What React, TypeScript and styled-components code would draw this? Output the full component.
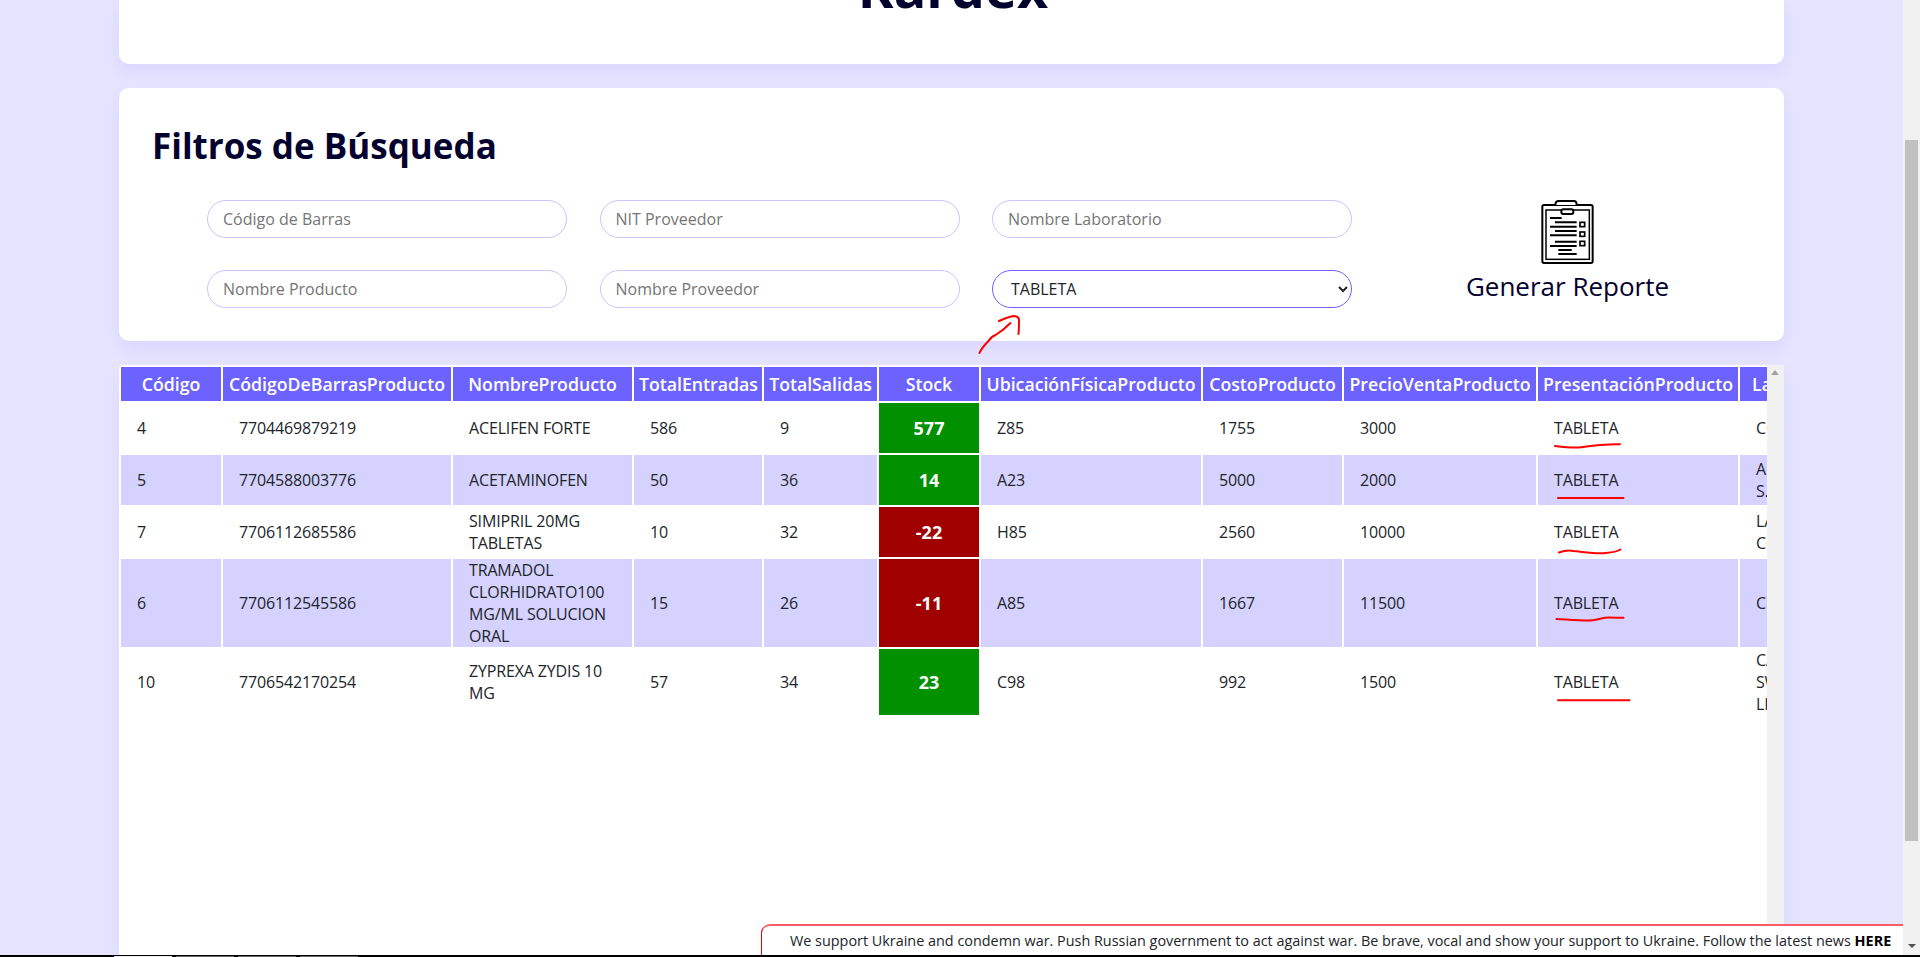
import React from "react";
import styled, { createGlobalStyle } from "styled-components";

const Global = createGlobalStyle`
  html, body { margin: 0; padding: 0; height: 957px; overflow: hidden; background: #000; }
  #root { height: 957px; }
  * { box-sizing: border-box; }
`;

const Shell = styled.div`
  position: relative;
  height: 957px;
  display: flex;
  flex-direction: column;
  overflow: hidden;
  font-family: "Open Sans", "Liberation Sans", sans-serif;
  font-size: 16px;
  color: #212529;
`;
const Viewport = styled.div`
  flex: 1;
  min-height: 0;
  display: flex;
`;
const Page = styled.main`
  position: relative;
  flex: 1;
  min-width: 0;
  background: #e7e4ff;
  padding: 0 119px;
  display: flex;
  flex-direction: column;
  gap: 24px;
  overflow: hidden;
`;
const Card = styled.section`
  background: #fff;
  border-radius: 10px;
  box-shadow: 0 8px 16px rgba(108, 99, 255, 0.1);
`;
const TitleCard = styled(Card)`
  height: 64px;
  flex: none;
  border-radius: 0 0 10px 10px;
  display: flex;
  flex-direction: column;
  justify-content: flex-end;
  align-items: center;
`;
const PageTitle = styled.h1`
  margin: 0 0 77px;
  padding-left: 3px;
  font-size: 54px;
  line-height: 30px;
  height: 15px;
  font-weight: 700;
  color: #03012d;
`;
const FilterCard = styled(Card)`
  height: 253px;
  flex: none;
  padding: 34px 33px 0;
`;
const SectionTitle = styled.h2`
  margin: 0;
  font-size: 35px;
  line-height: 48px;
  font-weight: 700;
  color: #03012d;
`;
const FilterGrid = styled.div`
  margin: 30px 0 0 55px;
  display: grid;
  grid-template-columns: 360px 360px 360px 1fr;
  grid-auto-rows: 38px;
  gap: 32px 32.5px;
`;
const TextField = styled.input`
  width: 100%;
  height: 38px;
  border: 1px solid #c9c5ff;
  border-radius: 19px;
  padding: 0 15px;
  font: inherit;
  color: #212529;
  background: #fff;
  outline: none;
  &::placeholder { color: #757575; opacity: 1; }
`;
const SelectField = styled.select`
  width: 100%;
  height: 38px;
  border: 1px solid #6c63ff;
  border-radius: 19px;
  padding: 0 4px 0 14px;
  font: inherit;
  color: #212529;
  background-color: #fff;
  outline: none;
`;
const ReportButton = styled.button`
  grid-column: 4;
  grid-row: 1 / span 2;
  margin: 0 0 0 63px;
  width: 240px;
  padding: 0;
  border: 0;
  background: none;
  display: flex;
  flex-direction: column;
  align-items: center;
  font-family: inherit;
  font-size: 26px;
  line-height: 34px;
  color: #03012d;
`;
const ReportIcon = styled.svg`
  width: 53px;
  height: 64px;
  margin-bottom: 5px;
  display: block;
`;
const TableCard = styled(Card)`
  flex: 1;
  min-height: 0;
  display: flex;
  border-radius: 4px 0 0 0;
`;
const TableArea = styled.div`
  flex: 1;
  min-width: 0;
  overflow: hidden;
`;
const Table = styled.table`
  table-layout: fixed;
  width: 1826px;
  border-collapse: separate;
  border-spacing: 2px;
`;
const Col = styled.col<{ $w: number }>`
  width: ${(p) => p.$w}px;
`;
const HeadCell = styled.th`
  height: 34px;
  padding: 0 5px;
  background: #6c63ff;
  color: #fff;
  font-weight: 600;
  font-size: 17.7px;
  line-height: 24px;
  white-space: nowrap;
  overflow: hidden;
  text-align: center;
`;
const Row = styled.tr<{ $alt: boolean }>`
  height: 50px;
  background: ${(p) => (p.$alt ? "#d5d2ff" : "#fff")};
`;
const Cell = styled.td`
  padding: 0 16px;
  line-height: 22px;
  letter-spacing: -0.15px;
  white-space: pre-line;
  overflow: hidden;
  color: #212529;
`;
const StockCell = styled.td<{ $low: boolean }>`
  padding: 0;
  text-align: center;
  font-weight: 700;
  font-size: 18px;
  color: #fff;
  background: ${(p) => (p.$low ? "#a00000" : "#009000")};
`;
const Track = styled.div`
  position: relative;
  flex: none;
  width: 17px;
  background: #f1f1f1;
`;
const Thumb = styled.div`
  position: absolute;
  top: 140px;
  left: 2px;
  width: 13px;
  height: 701px;
  background: #c1c1c1;
`;
const ArrowUp = styled.span`
  position: absolute;
  top: 5px;
  left: 4px;
  border: 4.5px solid transparent;
  border-top: 0;
  border-bottom: 5px solid #a3a3a3;
`;
const ArrowDown = styled.span`
  position: absolute;
  bottom: 7px;
  left: 5px;
  border: 4px solid transparent;
  border-bottom: 0;
  border-top: 4px solid #505050;
`;
const Banner = styled.aside`
  position: absolute;
  right: 0;
  bottom: 0;
  left: 761px;
  height: 31px;
  padding: 4px 0 0 28px;
  background: #fff;
  border-top: 2px solid #ff5b64;
  border-left: 1px solid #f00;
  border-radius: 9px 0 0 0;
  font-size: 14.4px;
  line-height: 22px;
  white-space: nowrap;
  color: #212529;
`;
const BannerLink = styled.b`
  font-weight: 700;
  color: #000;
`;
const BottomEdge = styled.div`
  height: 2px;
  flex: none;
  background: #000;
  display: flex;
  align-items: flex-end;
  gap: 4px;
  padding-left: 114px;
`;
const Sliver = styled.span<{ $active?: boolean }>`
  width: 58px;
  height: 1px;
  background: ${(p) => (p.$active ? "#e8e8e8" : "#666")};
`;
const Ink = styled.svg`
  position: absolute;
  top: 0;
  left: 0;
  width: 1920px;
  height: 957px;
  pointer-events: none;
  fill: none;
  stroke: #f00;
  stroke-width: 2;
  stroke-linecap: round;
  stroke-linejoin: round;
`;

const widths = [100, 228, 179, 128, 113, 100, 220, 139, 192, 200, 203];
const heads = [
  "Código", "CódigoDeBarrasProducto", "NombreProducto", "TotalEntradas", "TotalSalidas", "Stock",
  "UbicaciónFísicaProducto", "CostoProducto", "PrecioVentaProducto", "PresentaciónProducto", "LaboratorioProducto",
];
const rows = [
  { id: "4", bar: "7704469879219", name: "ACELIFEN FORTE", inn: "586", out: "9", stock: 577, loc: "Z85", cost: "1755", price: "3000", lab: "COASPHARMA" },
  { id: "5", bar: "7704588003776", name: "ACETAMINOFEN", inn: "50", out: "36", stock: 14, loc: "A23", cost: "5000", price: "2000", lab: "ALFA\nS.A." },
  { id: "7", bar: "7706112685586", name: "SIMIPRIL 20MG TABLETAS", inn: "10", out: "32", stock: -22, loc: "H85", cost: "2560", price: "10000", lab: "LA SANTE\nCOLOMBIA" },
  { id: "6", bar: "7706112545586", name: "TRAMADOL CLORHIDRATO100 MG/ML SOLUCION ORAL", inn: "15", out: "26", stock: -11, loc: "A85", cost: "1667", price: "11500", lab: "CHALVER" },
  { id: "10", bar: "7706542170254", name: "ZYPREXA ZYDIS 10 MG", inn: "57", out: "34", stock: 23, loc: "C98", cost: "992", price: "1500", lab: "CAPLIN\nSWISS\nLIMITED" },
];

const Clipboard = () => (
  <ReportIcon viewBox="304 30 157 192" fill="none" stroke="#000" strokeWidth="6">
    <rect x="307" y="45" width="151" height="174" rx="5" />
    <rect x="318" y="60" width="130" height="148" strokeWidth="4.5" />
    <path d="M346 45c0-8 4-12 10-12h46c6 0 8 4 8 12" fill="#fff" />
    <rect x="364" y="58" width="36" height="14" rx="6" fill="#fff" />
    <path d="M330 84h35M345 97h65M330 110h80M345 123h65M330 136h80M345 155h65M330 168h80M355 180h40M355 192h55" />
    <rect x="420" y="97" width="14" height="13" strokeWidth="5" />
    <rect x="420" y="126" width="14" height="13" strokeWidth="5" />
    <rect x="420" y="154" width="14" height="13" strokeWidth="5" />
  </ReportIcon>
);

export default function App() {
  return (
    <Shell>
      <Global />
      <Viewport>
        <Page>
          <TitleCard>
            <PageTitle>Kardex</PageTitle>
          </TitleCard>
          <FilterCard>
            <SectionTitle>Filtros de Búsqueda</SectionTitle>
            <FilterGrid>
              <TextField placeholder="Código de Barras" />
              <TextField placeholder="NIT Proveedor" />
              <TextField placeholder="Nombre Laboratorio" />
              <ReportButton type="button">
                <Clipboard />
                Generar Reporte
              </ReportButton>
              <TextField placeholder="Nombre Producto" />
              <TextField placeholder="Nombre Proveedor" />
              <SelectField defaultValue="TABLETA">
                <option>TABLETA</option>
              </SelectField>
            </FilterGrid>
          </FilterCard>
          <TableCard>
            <TableArea>
              <Table>
                <colgroup>
                  {widths.map((w, i) => (
                    <Col key={i} $w={w} />
                  ))}
                </colgroup>
                <thead>
                  <tr>
                    {heads.map((h) => (
                      <HeadCell key={h}>{h}</HeadCell>
                    ))}
                  </tr>
                </thead>
                <tbody>
                  {rows.map((r, i) => (
                    <Row key={r.id} $alt={i % 2 === 1}>
                      <Cell>{r.id}</Cell>
                      <Cell>{r.bar}</Cell>
                      <Cell>{r.name}</Cell>
                      <Cell>{r.inn}</Cell>
                      <Cell>{r.out}</Cell>
                      <StockCell $low={r.stock < 0}>{r.stock}</StockCell>
                      <Cell>{r.loc}</Cell>
                      <Cell>{r.cost}</Cell>
                      <Cell>{r.price}</Cell>
                      <Cell>TABLETA</Cell>
                      <Cell>{r.lab}</Cell>
                    </Row>
                  ))}
                </tbody>
              </Table>
            </TableArea>
            <Track>
              <ArrowUp />
            </Track>
          </TableCard>
          <Banner>
            We support Ukraine and condemn war. Push Russian government to act against war. Be brave, vocal and show your support to Ukraine. Follow the latest news <BannerLink>HERE</BannerLink>
          </Banner>
        </Page>
        <Track>
          <Thumb />
          <ArrowDown />
        </Track>
      </Viewport>
      <BottomEdge>
        <Sliver $active />
        <Sliver />
        <Sliver />
        <Sliver />
      </BottomEdge>
      <Ink viewBox="0 0 1920 957">
        <path d="M979.5 353c2-5 6-9 9-12 2-3 4-5 7-6 5-3 10-7 15-12" />
        <path d="M999 321c4-2 9-4 14-5 3 0 6 1 6 4 0 5 0 10-.5 14" />
        <path d="M1555 446c8 1 16 2 24 1.500 7-.5 13-2 21-2.500 7-.5 14-1 20-.7" />
        <path d="M1558 498h65.500" />
        <path d="M1559 552.500c4-1.500 9-2.500 14.500-1.500 11 1 22 3 32.500 2 6-.5 11-1.500 14.500-3.500" />
        <path d="M1556.500 619c10 .5 21 1.500 31.500 1.500 8 0 14-3 21-3 5 0 10 .3 14.500.3" />
        <path d="M1558 700.300h71.500" />
      </Ink>
    </Shell>
  );
}
